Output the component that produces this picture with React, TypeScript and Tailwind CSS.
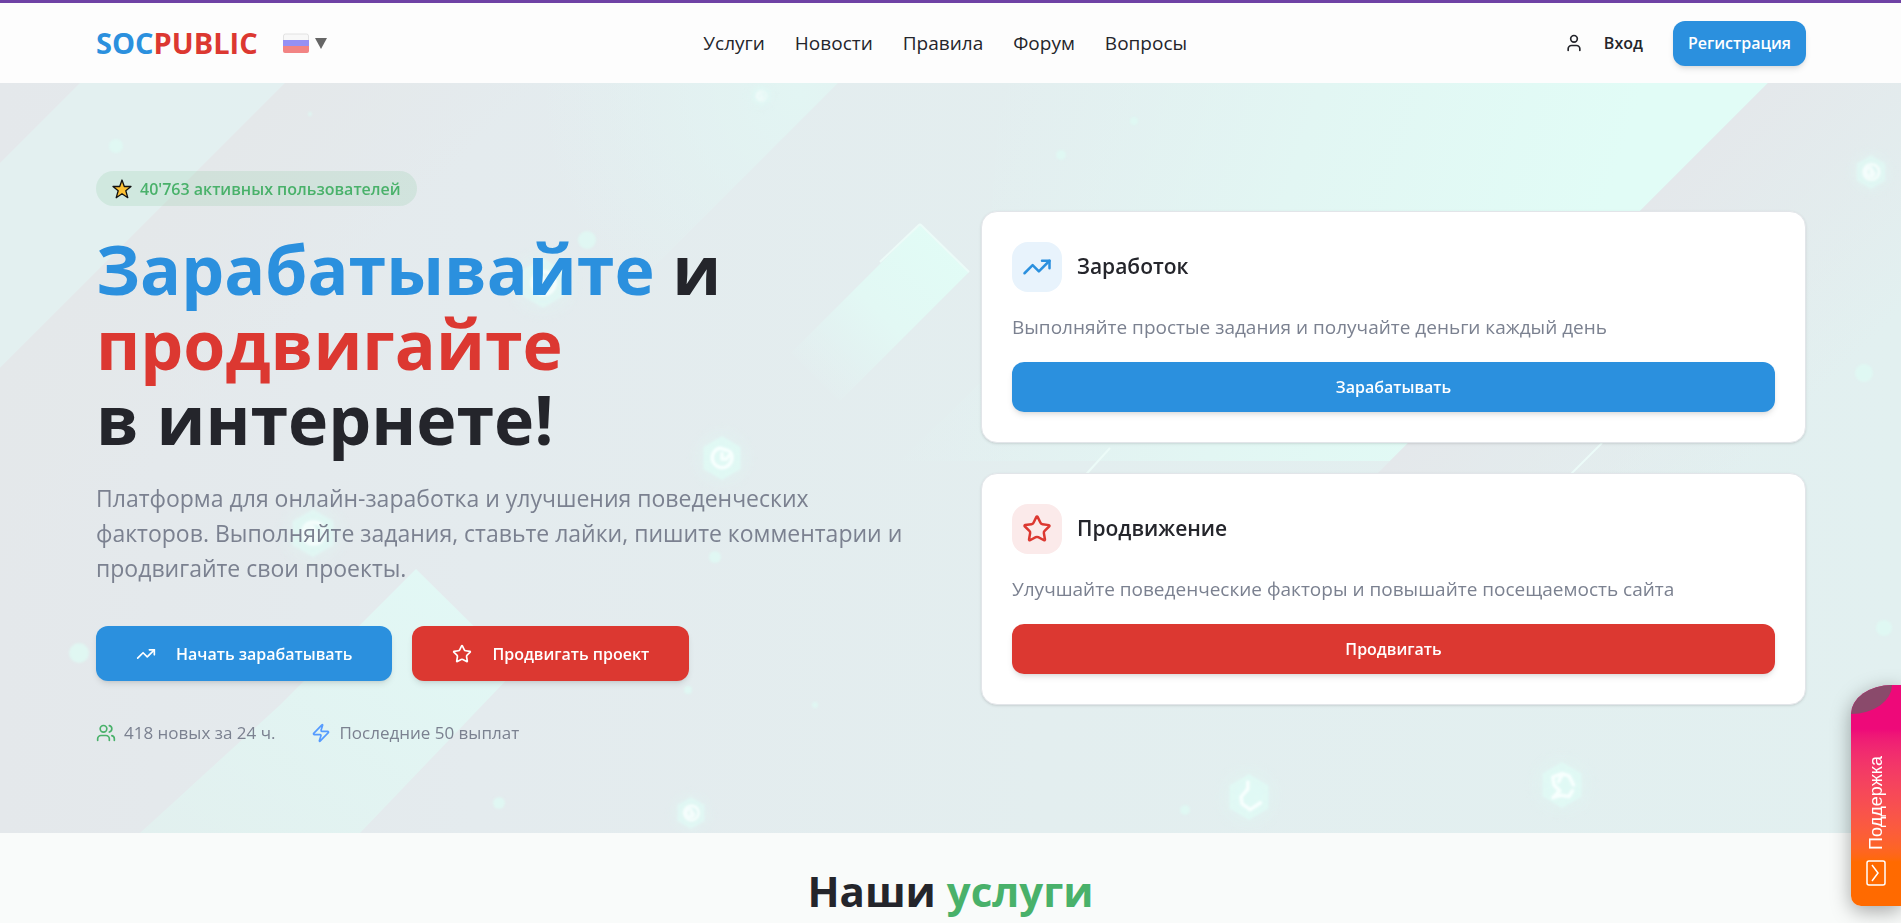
import { Star, TrendingUp, User, Users, Zap } from 'lucide-react';

const navLinks = ['Услуги', 'Новости', 'Правила', 'Форум', 'Вопросы'];

const ring = 'M-2-9A9 9 0 1 0 7-6M-2-9 5-7M0-4V1H4L6-2';
const coin = 'M0-9A9 9 0 1 0 1-9M0-5A5 5 0 1 0 4 2L0-4M0-1V3';
const hook = 'M-1-13V-7L-7 0-6 6 1 11 10 5';
const curl = 'M-8 11-1 9M-8 11-2 5-7 0-8-7 0-10 6-8 10 0M-1 9 6 10 9 5M0-9-3-3';

// Floating hexagon badges: centre, radius, glyph
const hexes = [
  { x: 761, y: 13, r: 11, glyph: coin, opacity: 0.6 },
  { x: 1871, y: 89, r: 17, glyph: coin, opacity: 0.9 },
  { x: 722, y: 375, r: 22, glyph: ring, opacity: 1 },
  { x: 543, y: 200, r: 25, glyph: coin, opacity: 0.9 },
  { x: 313, y: 450, r: 24, glyph: coin, opacity: 0.9 },
  { x: 691, y: 730, r: 16, glyph: coin, opacity: 0.9 },
  { x: 1249, y: 714, r: 23, glyph: hook, opacity: 1 },
  { x: 1562, y: 702, r: 23, glyph: curl, opacity: 1 },
];

const dots = [
  { x: 116, y: 63, r: 7 },
  { x: 79, y: 570, r: 10 },
  { x: 1864, y: 290, r: 9 },
  { x: 1884, y: 545, r: 8 },
  { x: 499, y: 720, r: 6 },
  { x: 1185, y: 727, r: 5 },
  { x: 1134, y: 38, r: 4 },
  { x: 1061, y: 72, r: 5 },
  { x: 310, y: 31, r: 2 },
  { x: 815, y: 622, r: 3 },
  { x: 688, y: 607, r: 4 },
  { x: 587, y: 157, r: 9 },
  { x: 715, y: 474, r: 6 },
];

function HeroBackdrop() {
  return (
    <svg
      className="absolute inset-0 h-full w-full"
      viewBox="0 0 1901 750"
      preserveAspectRatio="xMidYMid slice"
      aria-hidden="true"
    >
      <defs>
        <linearGradient id="base" x1="0" y1="0" x2="1" y2="0">
          <stop offset="0" stopColor="#e4e8eb" />
          <stop offset="0.25" stopColor="#e4ebee" />
          <stop offset="0.55" stopColor="#e3eeef" />
          <stop offset="1" stopColor="#e2f0f0" />
        </linearGradient>
        <linearGradient id="beam" gradientUnits="userSpaceOnUse" x1="1000" y1="0" x2="1590" y2="180">
          <stop offset="0" stopColor="#e2f4f3" stopOpacity="0" />
          <stop offset="0.5" stopColor="#e2f6f3" />
          <stop offset="1" stopColor="#e1fcf6" />
        </linearGradient>
        <linearGradient id="shardFade" x1="0" y1="1" x2="1" y2="0">
          <stop offset="0.1" stopColor="#e2f6f4" stopOpacity="0" />
          <stop offset="0.5" stopColor="#e2f8f4" />
          <stop offset="1" stopColor="#e1fdf6" />
        </linearGradient>
        <linearGradient id="shard" x1="0" y1="1" x2="1" y2="0">
          <stop offset="0" stopColor="#e1f3f0" stopOpacity="0.7" />
          <stop offset="1" stopColor="#e2f9f6" />
        </linearGradient>
        <radialGradient id="wedge" gradientUnits="userSpaceOnUse" cx="800" cy="10" r="260">
          <stop offset="0" stopColor="#e2f5f3" />
          <stop offset="1" stopColor="#e2f4f3" stopOpacity="0" />
        </radialGradient>
        <linearGradient id="shadeLeft" gradientUnits="userSpaceOnUse" x1="142" y1="142" x2="270" y2="270">
          <stop offset="0" stopColor="#e4e8ea" />
          <stop offset="1" stopColor="#e4e8ea" stopOpacity="0" />
        </linearGradient>
        <linearGradient id="shadeRight" gradientUnits="userSpaceOnUse" x1="1600" y1="168" x2="1780" y2="348">
          <stop offset="0" stopColor="#e4e8eb" />
          <stop offset="1" stopColor="#e4e8eb" stopOpacity="0" />
        </linearGradient>
        <radialGradient id="halo">
          <stop offset="0" stopColor="#e1f6f3" />
          <stop offset="1" stopColor="#e1f6f3" stopOpacity="0" />
        </radialGradient>
        <filter id="soft">
          <feGaussianBlur stdDeviation="1" />
        </filter>
      </defs>
      <rect width="1901" height="750" fill="url(#base)" />
      <path d="M80 0H285L0 285V80Z" fill="#e2f1f1" opacity="0.8" />
      <path d="M285 0H600L0 600V285Z" fill="url(#shadeLeft)" />
      <path d="M500 0H838L538 300Z" fill="url(#wedge)" />
      <path d="M1000 0H1768L1390 378H900L980 300Z" fill="url(#beam)" />
      <path d="M1768 0H1901V400H1368Z" fill="url(#shadeRight)" />
      <path d="M920 141L969 189L840 318L791 270Z" fill="url(#shardFade)" />
      <path d="M416 486L517 586L360 750H140L280 622Z" fill="url(#shard)" />
      <path d="M920 141 880 179M920 141 969 189M1110 365L1080 398M1602 360L1568 394" fill="none" stroke="#ecfbf8" strokeWidth="2" />
      <g filter="url(#soft)">
        {dots.map((d) => (
          <circle key={d.x} cx={d.x} cy={d.y} r={d.r} fill="#defaf4" opacity="0.8" />
        ))}
        {hexes.map((h) => (
          <g key={h.x} transform={`translate(${h.x} ${h.y}) scale(${h.r / 20})`} opacity={h.opacity}>
            <circle r="32" fill="url(#halo)" opacity="0.7" />
            <path d="M0-20 17-10V10L0 20-17 10V-10Z" fill="#e0faf5" opacity="0.8" />
            <path d={h.glyph} fill="none" stroke="#f8fffe" strokeWidth="3" strokeLinecap="round" strokeLinejoin="round" />
          </g>
        ))}
      </g>
    </svg>
  );
}

function Header() {
  return (
    <header className="border-t-3 border-[#6f42a5] bg-[#fdfdfd]">
      <div className="flex h-20 items-center justify-between pr-[95px] pl-24">
        <div className="flex items-center gap-[25px]">
          <a href="#" className="text-[29px] font-bold text-[#2b90de]">
            SOC<span className="text-[#dc3831]">PUBLIC</span>
          </a>
          <button type="button" aria-label="Выбор языка" className="flex items-center gap-1.5">
            <svg className="h-5 w-[26px]" viewBox="0 0 26 20" aria-hidden="true">
              <rect x="0.5" y="1" width="25" height="18" rx="2" fill="#f8f8f8" stroke="#e2e2e2" />
              <path d="M0 7h26v6H0z" fill="#9590f5" />
              <path d="M0 13h26v5a2 2 0 0 1-2 2H2a2 2 0 0 1-2-2z" fill="#f28484" />
            </svg>
            <svg className="size-3" viewBox="0 0 12 12" aria-hidden="true">
              <path d="M0 1h12L6 12z" fill="#666" />
            </svg>
          </button>
        </div>
        <nav className="flex items-center gap-[30px] text-[19px] text-[#24252b]">
          {navLinks.map((label) => (
            <a key={label} href="#">{label}</a>
          ))}
        </nav>
        <div className="flex items-center gap-[30px]">
          <a href="#" className="flex items-center gap-5 text-[16px] font-semibold text-[#24252b]">
            <User className="size-5" aria-hidden="true" />
            Вход
          </a>
          <button type="button" className="h-[45px] rounded-xl bg-[#2b90de] px-[15px] text-[16px] font-semibold text-white shadow-md">
            Регистрация
          </button>
        </div>
      </div>
    </header>
  );
}

function ActionCard({ title, text, action, tone }: { title: string; text: string; action: string; tone: 'blue' | 'red' }) {
  const blue = tone === 'blue';
  const Icon = blue ? TrendingUp : Star;

  return (
    <article className="rounded-2xl border border-[#e2e5e9] bg-white p-[30px] shadow-sm">
      <div className="flex items-center gap-[15px]">
        <div className={`flex size-[50px] items-center justify-center rounded-2xl ${blue ? 'bg-[#e8f3fc] text-[#2b90de]' : 'bg-[#fbeaea] text-[#dc3831]'}`}>
          <Icon className="size-[30px]" aria-hidden="true" />
        </div>
        <h3 className="text-[21px] font-semibold text-[#24252b]">{title}</h3>
      </div>
      <p className="mt-5 text-[19px] leading-[30px] text-[#7b8190]">{text}</p>
      <button
        type="button"
        className={`mt-5 h-[50px] w-full rounded-xl text-[16px] font-semibold text-white shadow-md ${blue ? 'bg-[#2b90de]' : 'bg-[#dc3831]'}`}
      >
        {action}
      </button>
    </article>
  );
}

function Hero() {
  return (
    <section className="relative overflow-hidden">
      <HeroBackdrop />
      <div className="relative grid grid-cols-2 items-center gap-[60px] py-[88px] pr-[95px] pl-24">
        <div>
          <div className="inline-flex h-[35px] items-center gap-2 rounded-full bg-[#49b16a]/12 px-4 text-[16px] font-semibold text-[#49b16a]">
            <svg className="size-5" viewBox="0 0 20 20" aria-hidden="true">
              <path
                d="M10 1 12.3 7.5H19L13.8 11.8 15.8 18.7 10 14.7 4.2 18.7 6.2 11.8 1 7.5H7.7Z"
                fill="#fcc133"
                stroke="#111"
                strokeWidth="1.3"
                strokeLinejoin="round"
              />
            </svg>
            40'763 активных пользователей
          </div>
          <h1 className="mt-[25px] text-[68px] leading-[75px] font-bold text-[#24252b]">
            <span className="text-[#2b90de]">Зарабатывайте</span> и<br />
            <span className="text-[#dc3831]">продвигайте</span>
            <br />в интернете!
          </h1>
          <p className="mt-[25px] text-[23px] leading-[35px] text-[#7b8190]">
            Платформа для онлайн-заработка и улучшения поведенческих факторов. Выполняйте задания, ставьте лайки,
            пишите комментарии и продвигайте свои проекты.
          </p>
          <div className="mt-10 flex gap-5">
            <button type="button" className="flex h-[55px] items-center gap-5 rounded-xl bg-[#2b90de] px-10 text-[16px] font-semibold text-white shadow-md">
              <TrendingUp className="size-5" aria-hidden="true" />
              Начать зарабатывать
            </button>
            <button type="button" className="flex h-[55px] items-center gap-5 rounded-xl bg-[#dc3831] px-10 text-[16px] font-semibold text-white shadow-md">
              <Star className="size-5" aria-hidden="true" />
              Продвигать проект
            </button>
          </div>
          <div className="mt-10 flex gap-9 text-[17px] leading-6 text-[#7b8190]">
            <span className="flex items-center gap-2">
              <Users className="size-5 text-[#49b16a]" aria-hidden="true" />
              418 новых за 24 ч.
            </span>
            <span className="flex items-center gap-2">
              <Zap className="size-5 text-[#559bff]" aria-hidden="true" />
              Последние 50 выплат
            </span>
          </div>
        </div>
        <div className="flex flex-col gap-[30px]">
          <ActionCard
            title="Заработок"
            text="Выполняйте простые задания и получайте деньги каждый день"
            action="Зарабатывать"
            tone="blue"
          />
          <ActionCard
            title="Продвижение"
            text="Улучшайте поведенческие факторы и повышайте посещаемость сайта"
            action="Продвигать"
            tone="red"
          />
        </div>
      </div>
    </section>
  );
}

function SupportTab() {
  return (
    <button
      type="button"
      className="fixed right-0 bottom-[17px] flex h-[221px] w-[50px] flex-col items-center justify-end gap-2.5 overflow-hidden rounded-tl-[41px_29px] rounded-bl-[10px] bg-linear-to-b from-[#ee0979] from-20% to-[#ff6a00] to-80% pb-5 font-['Liberation_Sans',sans-serif] text-[18px] text-white shadow-[0_5px_20px_rgba(0,0,0,0.35)]"
    >
      <span className="absolute top-0 left-0 h-[29px] w-[41px] rounded-br-[41px_29px] bg-[#8a4a6b]" />
      <span className="rotate-180 [writing-mode:vertical-rl]">Поддержка</span>
      <svg className="h-[26px] w-5" viewBox="0 0 20 26" fill="none" stroke="currentColor" strokeWidth="1.5" aria-hidden="true">
        <rect x="1" y="1" width="18" height="24" rx="2" />
        <path d="M6 5l6 8-6 8" />
      </svg>
    </button>
  );
}

export default function App() {
  return (
    <div className="h-screen overflow-hidden bg-[#f9fbfa] font-['Open_Sans','Noto_Sans',sans-serif]">
      <Header />
      <main>
        <Hero />
        <section className="py-[30px]">
          <h2 className="text-center text-[42px] leading-[55px] font-bold text-[#24252b]">
            Наши <span className="text-[#49b16a]">услуги</span>
          </h2>
        </section>
      </main>
      <SupportTab />
    </div>
  );
}
